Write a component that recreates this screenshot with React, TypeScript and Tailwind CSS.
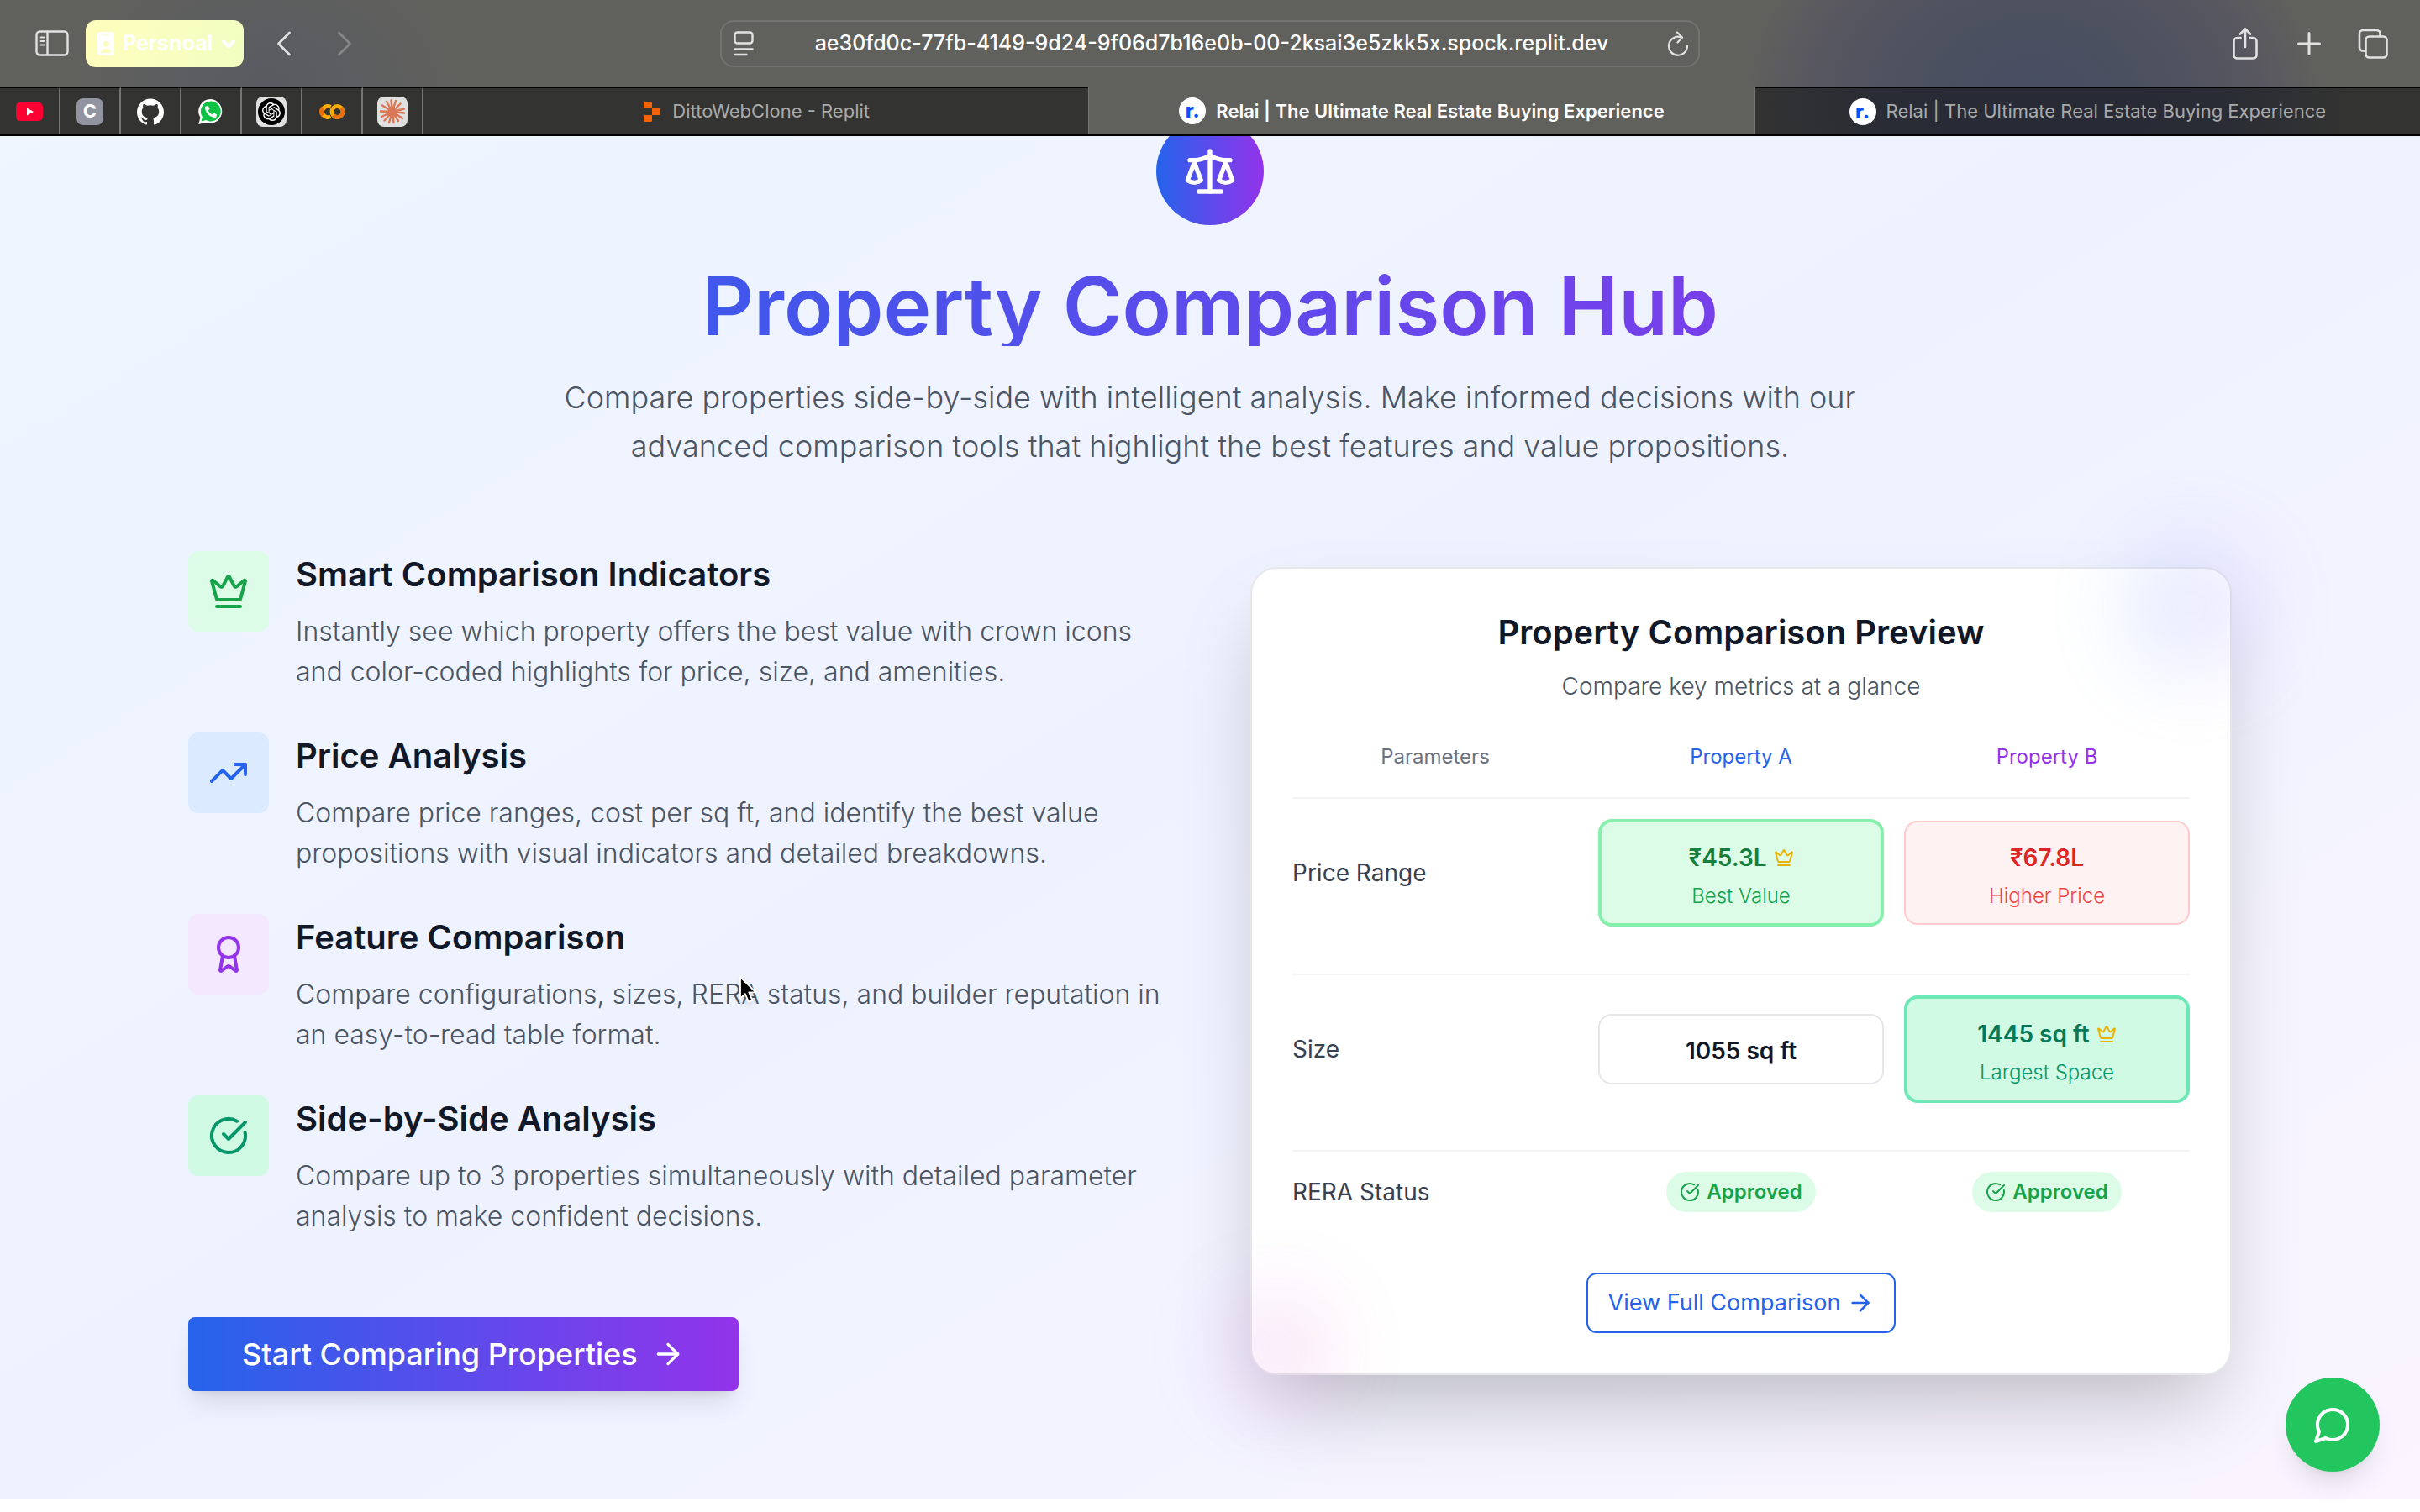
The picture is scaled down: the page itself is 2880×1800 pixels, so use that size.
import type { ReactNode } from "react";
import { SiGithub, SiOpenai, SiReplit } from "react-icons/si";
import { FaPhoneAlt } from "react-icons/fa";

type IconProps = { className?: string };

function Stroke({ className, children, width = 2 }: { className?: string; children: ReactNode; width?: number }) {
  return (
    <svg
      aria-hidden="true"
      viewBox="0 0 24 24"
      fill="none"
      stroke="currentColor"
      strokeWidth={width}
      strokeLinecap="round"
      strokeLinejoin="round"
      className={className}
    >
      {children}
    </svg>
  );
}

const ScaleIcon = ({ className }: IconProps) => (
  <Stroke className={className}>
    <path d="m16 16 3-8 3 8c-.87.65-1.92 1-3 1s-2.13-.35-3-1Z" />
    <path d="m2 16 3-8 3 8c-.87.65-1.92 1-3 1s-2.13-.35-3-1Z" />
    <path d="M7 21h10" />
    <path d="M12 3v18" />
    <path d="M3 7h2c2 0 5-1 7-2 2 1 5 2 7 2h2" />
  </Stroke>
);

const CrownIcon = ({ className }: IconProps) => (
  <Stroke className={className}>
    <path d="M11.562 3.266a.5.5 0 0 1 .876 0L15.39 8.87a1 1 0 0 0 1.516.294L21.183 5.5a.5.5 0 0 1 .798.519l-2.834 10.246a1 1 0 0 1-.956.734H5.81a1 1 0 0 1-.957-.734L2.02 6.02a.5.5 0 0 1 .798-.519l4.276 3.664a1 1 0 0 0 1.516-.294z" />
    <path d="M5 21h14" />
  </Stroke>
);

const TrendIcon = ({ className }: IconProps) => (
  <Stroke className={className}>
    <polyline points="22 7 13.5 15.5 8.5 10.5 2 17" />
    <polyline points="16 7 22 7 22 13" />
  </Stroke>
);

const AwardIcon = ({ className }: IconProps) => (
  <Stroke className={className}>
    <path d="m15.477 12.89 1.515 8.526a.5.5 0 0 1-.81.47l-3.58-2.687a1 1 0 0 0-1.197 0l-3.586 2.686a.5.5 0 0 1-.81-.469l1.514-8.526" />
    <circle cx="12" cy="8" r="6" />
  </Stroke>
);

const CheckIcon = ({ className }: IconProps) => (
  <Stroke className={className}>
    <path d="M21.801 10A10 10 0 1 1 17 3.335" />
    <path d="m9 11 3 3L22 4" />
  </Stroke>
);

const ArrowIcon = ({ className }: IconProps) => (
  <Stroke className={className}>
    <path d="M5 12h14" />
    <path d="m12 5 7 7-7 7" />
  </Stroke>
);

const ChatIcon = ({ className }: IconProps) => (
  <Stroke className={className}>
    <path d="M7.9 20A9 9 0 1 0 4 16.1L2 22Z" />
  </Stroke>
);

function ToolButton({ label, className = "", children }: { label: string; className?: string; children: ReactNode }) {
  return (
    <button type="button" aria-label={label} className={`flex shrink-0 items-center justify-center text-[#e2e2e2] ${className}`}>
      {children}
    </button>
  );
}

function Toolbar() {
  return (
    <div className="flex h-26 items-center bg-[#60605d] bg-[radial-gradient(ellipse_340px_250px_at_84%_110%,#484e63_0%,#4b5060_35%,#53545f_65%,#595860_80%,transparent_100%),radial-gradient(ellipse_220px_160px_at_11%_100%,#595b62_0%,transparent_100%)] px-8">
      <div className="flex flex-1 items-center">
        <ToolButton label="Show sidebar" className="ml-1.5 h-14 w-12">
          <svg viewBox="0 0 40 32" className="h-8 w-10" fill="none" stroke="currentColor" strokeWidth="2.4" strokeLinecap="round">
            <rect x="1.5" y="1.5" width="37" height="28" rx="4" />
            <path d="M14.5 2v27" />
            <path d="M6.5 8.500h4M6.500 13h4M6.500 17.500h4" strokeWidth="1.800" />
          </svg>
        </ToolButton>
        <button
          type="button"
          className="ml-4 flex h-14 items-center rounded-xl bg-[linear-gradient(100deg,#fefdbb,#fafec0_40%,#f1fec0)] pr-1 pl-3.5 text-white"
        >
          <svg aria-hidden="true" viewBox="0 0 20 28" className="h-7 w-5">
            <rect width="20" height="28" rx="3" fill="#fff" />
            <path d="M6 3.700h8" stroke="#fbfcbe" strokeWidth="1.300" strokeLinecap="round" />
            <circle cx="10" cy="14.500" r="3.200" fill="#fbfcbe" />
            <path d="M4 25c0-3.500 2.500-5 6-5s6 1.500 6 5Z" fill="#fbfcbe" />
          </svg>
          <span className="ml-2.5 text-[25px] font-bold">Persnoal</span>
          <Stroke className="ml-1 size-7" width={3.4}>
            <path d="m7 10 5 5 5-5" />
          </Stroke>
        </button>
        <ToolButton label="Back" className="ml-6 h-14 w-12">
          <svg viewBox="0 0 18 30" className="h-[30px] w-[18px]" fill="none" stroke="currentColor" strokeWidth="2.800" strokeLinecap="round" strokeLinejoin="round">
            <path d="M15.500 2 2.500 15l13 13" />
          </svg>
        </ToolButton>
        <ToolButton label="Forward" className="ml-6 h-14 w-12 opacity-30">
          <svg viewBox="0 0 18 30" className="h-[30px] w-[18px]" fill="none" stroke="currentColor" strokeWidth="2.800" strokeLinecap="round" strokeLinejoin="round">
            <path d="m2.500 2 13 13-13 13" />
          </svg>
        </ToolButton>
      </div>
      <div className="flex h-14 w-[1166px] items-center rounded-2xl border-2 border-[#737371] px-2">
        <ToolButton label="Page settings" className="h-12 w-9">
          <svg viewBox="0 0 24 30" className="h-[30px] w-6" fill="none" stroke="currentColor" strokeWidth="2.400" strokeLinecap="round">
            <rect x="1.500" y="1.500" width="21" height="13" rx="3" />
            <path d="M1.500 21.500h21M1.500 28h14" />
          </svg>
        </ToolButton>
        <input
          aria-label="Address"
          className="min-w-0 flex-1 bg-transparent text-center text-[25px] font-medium text-white outline-none"
          defaultValue="ae30fd0c-77fb-4149-9d24-9f06d7b16e0b-00-2ksai3e5zkk5x.spock.replit.dev"
        />
        <ToolButton label="Reload" className="h-12 w-8">
          <svg viewBox="0 0 26 30" className="h-[30px] w-[26px]" fill="none" stroke="currentColor" strokeWidth="2.200" strokeLinecap="round" strokeLinejoin="round">
            <path d="M16.500 7.300A11 11 0 1 0 24 17.500" />
            <path d="m12 1.500 6 6-5.500 6" />
          </svg>
        </ToolButton>
      </div>
      <div className="flex flex-1 items-center justify-end gap-7">
        <ToolButton label="Share" className="h-14 w-12">
          <svg viewBox="0 0 30 38" className="h-[38px] w-[30px]" fill="none" stroke="currentColor" strokeWidth="2.600" strokeLinecap="round" strokeLinejoin="round">
            <path d="M9.500 12H5.500a4 4 0 0 0-4 4v16.500a4 4 0 0 0 4 4h19a4 4 0 0 0 4-4V16a4 4 0 0 0-4-4h-4" />
            <path d="M15 23V2M9 7.500 15 1.500l6 6" />
          </svg>
        </ToolButton>
        <ToolButton label="New tab" className="h-14 w-12">
          <svg viewBox="0 0 28 28" className="size-7" fill="none" stroke="currentColor" strokeWidth="3" strokeLinecap="round">
            <path d="M14 1.500v25M1.500 14h25" />
          </svg>
        </ToolButton>
        <ToolButton label="Tab overview" className="h-14 w-12">
          <svg viewBox="0 0 36 36" className="size-9" fill="none" stroke="currentColor" strokeWidth="2.600" strokeLinejoin="round">
            <rect x="9.500" y="9.500" width="25" height="25" rx="4" />
            <path d="M9 26.500H6a4 4 0 0 1-4-4V6a4 4 0 0 1 4-4h16.500a4 4 0 0 1 4 4v3" />
          </svg>
        </ToolButton>
      </div>
    </div>
  );
}

const YoutubeIcon = () => (
  <svg aria-hidden="true" viewBox="0 0 32 22" className="h-[22px] w-8">
    <rect width="32" height="22" rx="5" fill="#ff0033" />
    <path d="M13 6.500 21 11l-8 4.500Z" fill="#fff" />
  </svg>
);

const WhatsappIcon = () => (
  <span className="relative flex size-8 items-center justify-center">
    <svg aria-hidden="true" viewBox="0 0 32 32" className="size-8">
      <path d="M16 1A14.500 14.500 0 0 0 3.400 23L1.300 31l8-2.100A14.500 14.500 0 1 0 16 1Z" fill="#fff" />
      <path d="M16 3.500A12 12 0 0 0 5.900 22L4.500 27.600l5.600-1.500A12 12 0 1 0 16 3.500Z" fill="#0fc144" />
    </svg>
    <FaPhoneAlt aria-hidden="true" className="absolute size-3.5 text-white" />
  </span>
);

const ColabIcon = () => (
  <svg aria-hidden="true" viewBox="0 0 32 20" className="h-5 w-8" fill="none" strokeWidth="5">
    <path d="M14.500 4.500A6.500 6.500 0 1 0 14.500 15.500" stroke="#f9ab00" />
    <path d="M5.400 5.400A6.500 6.500 0 0 0 5.400 14.600" stroke="#e8710a" />
    <circle cx="22.500" cy="10" r="6.500" stroke="#f9ab00" />
    <path d="M27.100 5.400A6.500 6.500 0 0 1 17.900 14.600" stroke="#e8710a" />
  </svg>
);

const BurstIcon = () => (
  <span className="flex size-9 items-center justify-center rounded-lg bg-[#e0e0e0]">
    <svg aria-hidden="true" viewBox="0 0 32 32" className="size-8" stroke="#d97757" strokeWidth="2.400" strokeLinecap="round">
      <path d="M16 16 14.500 2.500M16 16l4-13M16 16l9.500-9.500M16 16l14-3.500M16 16l14 1.500M16 16l12 8M16 16l7 11M16 16l1.500 13M16 16l-4 13M16 16 6.500 26.500M16 16 3 22M16 16l-14-.500M16 16 4 8.500M16 16 9 4" />
    </svg>
  </span>
);

const RelaiIcon = () => (
  <span aria-hidden="true" className="flex size-8 shrink-0 items-center justify-center rounded-full bg-white text-[24px] leading-8 font-extrabold text-[#0b50ff]">
    r.
  </span>
);

const pinned: { label: string; icon: ReactNode }[] = [
  { label: "YouTube", icon: <YoutubeIcon /> },
  {
    label: "C",
    icon: <span className="flex size-8 items-center justify-center rounded-lg bg-[#9394a1] text-[22px] font-bold text-white">C</span>,
  },
  { label: "GitHub", icon: <SiGithub className="size-8 text-white" /> },
  { label: "WhatsApp", icon: <WhatsappIcon /> },
  {
    label: "ChatGPT",
    icon: (
      <span className="flex size-9 items-center justify-center rounded-lg bg-[#e0e0e0]">
        <span className="flex size-8 items-center justify-center rounded-full bg-black">
          <SiOpenai className="size-[22px] text-white" />
        </span>
      </span>
    ),
  },
  { label: "Colab", icon: <ColabIcon /> },
  { label: "Claude", icon: <BurstIcon /> },
];

function TabBar() {
  return (
    <nav aria-label="Tabs" className="flex h-[58px] border-b-2 border-black bg-[#333331] text-[22px] text-[#a9a9a9]">
      {pinned.map((p) => (
        <button
          key={p.label}
          type="button"
          aria-label={p.label}
          className="flex w-18 shrink-0 items-center justify-center border-t border-r-2 border-t-black border-r-[#757574]"
        >
          {p.icon}
        </button>
      ))}
      <button type="button" className="flex min-w-0 flex-1 items-center justify-center gap-3 border-t border-black">
        <SiReplit aria-hidden="true" className="size-6 shrink-0 text-[#f26207]" />
        <span className="truncate">DittoWebClone - Replit</span>
      </button>
      <button
        type="button"
        className="flex min-w-0 flex-1 items-center justify-center gap-3 border-x border-[#757574] bg-[#60605d] font-semibold text-white"
      >
        <RelaiIcon />
        <span className="truncate">Relai | The Ultimate Real Estate Buying Experience</span>
      </button>
      <button
        type="button"
        className="flex min-w-0 flex-1 items-center justify-center gap-3 border-t border-black bg-[radial-gradient(ellipse_360px_200px_at_44%_40%,#282b36_0%,#292c35_55%,transparent_100%)]"
      >
        <RelaiIcon />
        <span className="truncate">Relai | The Ultimate Real Estate Buying Experience</span>
      </button>
    </nav>
  );
}

const features = [
  {
    title: "Smart Comparison Indicators",
    text: "Instantly see which property offers the best value with crown icons and color-coded highlights for price, size, and amenities.",
    tile: "bg-[#dcfce7] text-[#16a34a]",
    Icon: CrownIcon,
  },
  {
    title: "Price Analysis",
    text: "Compare price ranges, cost per sq ft, and identify the best value propositions with visual indicators and detailed breakdowns.",
    tile: "bg-[#dbeafe] text-[#2563eb]",
    Icon: TrendIcon,
  },
  {
    title: "Feature Comparison",
    text: "Compare configurations, sizes, RERA status, and builder reputation in an easy-to-read table format.",
    tile: "bg-[#f3e8ff] text-[#9333ea]",
    Icon: AwardIcon,
  },
  {
    title: "Side-by-Side Analysis",
    text: "Compare up to 3 properties simultaneously with detailed parameter analysis to make confident decisions.",
    tile: "bg-[#d1fae5] text-[#059669]",
    Icon: CheckIcon,
  },
];

function Metric({ box, value, valueColor, note, noteColor, best }: {
  box: string;
  value: string;
  valueColor: string;
  note?: string;
  noteColor?: string;
  best?: boolean;
}) {
  return (
    <div className={`rounded-2xl p-4 text-center ${box}`}>
      <div className={`flex h-12 items-center justify-center gap-2 pt-1 text-[28px] font-semibold ${valueColor}`}>
        {value}
        {best && <CrownIcon className="size-6 text-[#eab308]" />}
      </div>
      {note && <div className={`mt-2 text-[24px] leading-8 font-light ${noteColor}`}>{note}</div>}
    </div>
  );
}

function Approved() {
  return (
    <span className="inline-flex h-12 items-center gap-2 rounded-full bg-[#dcfce7] px-4 text-[24px] font-semibold text-[#16a34a]">
      <CheckIcon className="size-6" />
      Approved
    </span>
  );
}

function PreviewCard() {
  return (
    <div className="relative">
      <div className="rounded-[32px] border-2 border-[#e5e7eb] bg-white p-12 shadow-[0_50px_100px_-24px_rgba(0,0,0,0.25)]">
        <h3 className="text-center text-[40px] leading-14 font-semibold text-[#111827]">Property Comparison Preview</h3>
        <p className="mt-4 text-center text-[28px] leading-10 font-light text-[#4b5563]">Compare key metrics at a glance</p>
        <table className="mt-12 block w-full">
          <thead className="block">
            <tr className="grid grid-cols-3 gap-6 border-b-2 border-[#f3f4f6] pb-8 text-[24px] leading-8">
              <th scope="col" className="font-normal text-[#6b7280]">Parameters</th>
              <th scope="col" className="font-normal text-[#2563eb]">Property A</th>
              <th scope="col" className="font-normal text-[#9333ea]">Property B</th>
            </tr>
          </thead>
          <tbody className="block">
            <tr className="grid grid-cols-3 items-center gap-6 pt-6 pb-14">
              <th scope="row" className="text-left text-[28px] font-normal text-[#374151]">Price Range</th>
              <td className="p-0">
                <Metric best box="border-4 border-[#86efac] bg-[#dcfce7]" value="₹45.3L" valueColor="text-[#15803d]" note="Best Value" noteColor="text-[#16a34a]" />
              </td>
              <td className="p-0">
                <Metric box="border-2 border-[#fecaca] bg-[#fef2f2]" value="₹67.8L" valueColor="text-[#dc2626]" note="Higher Price" noteColor="text-[#ef4444]" />
              </td>
            </tr>
            <tr className="grid grid-cols-3 items-center gap-6 border-t-2 border-[#f3f4f6] pt-6 pb-14">
              <th scope="row" className="text-left text-[28px] font-normal text-[#374151]">Size</th>
              <td className="p-0">
                <Metric box="border-2 border-[#e5e7eb] bg-white" value="1055 sq ft" valueColor="text-[#111827]" />
              </td>
              <td className="p-0">
                <Metric best box="border-4 border-[#6ee7b7] bg-[#d1fae5]" value="1445 sq ft" valueColor="text-[#047857]" note="Largest Space" noteColor="text-[#059669]" />
              </td>
            </tr>
            <tr className="grid grid-cols-3 items-center gap-6 border-t-2 border-[#f3f4f6] py-6">
              <th scope="row" className="text-left text-[28px] font-normal text-[#374151]">RERA Status</th>
              <td className="flex justify-center p-0"><Approved /></td>
              <td className="flex justify-center p-0"><Approved /></td>
            </tr>
          </tbody>
        </table>
        <div className="mt-12 flex justify-center">
          <button type="button" className="flex h-18 items-center gap-2 rounded-xl border-2 border-[#2563eb] bg-white px-6 text-[27px] text-[#2563eb]">
            View Full Comparison
            <ArrowIcon className="size-8" />
          </button>
        </div>
      </div>
      <div aria-hidden="true" className="pointer-events-none absolute -top-8 -right-8 size-40 rounded-full bg-[linear-gradient(to_right,#60a5fa,#c084fc)] opacity-20 blur-[48px]" />
      <div aria-hidden="true" className="pointer-events-none absolute -bottom-8 -left-8 size-32 rounded-full bg-[linear-gradient(to_right,#c084fc,#f472b6)] opacity-20 blur-[48px]" />
    </div>
  );
}

function Cursor() {
  return (
    <svg aria-hidden="true" viewBox="0 0 24 36" className="pointer-events-none absolute top-[1161px] left-[879px] h-9 w-6 drop-shadow-md">
      <path d="M2 2v25.500l5.800-5.400 4.100 9.600 4.500-1.900-4.100-9.400h8.200Z" fill="#000" stroke="#fff" strokeWidth="1.800" strokeLinejoin="round" />
    </svg>
  );
}

export default function App() {
  return (
    <div className="relative min-h-screen overflow-hidden bg-white font-['Inter','Noto_Sans',sans-serif]">
      <header className="fixed inset-x-0 top-0 z-10">
        <Toolbar />
        <TabBar />
      </header>
      <main className="pt-3">
        <section className="bg-[linear-gradient(to_bottom_right,#eff6ff,#eef2ff_50%,#faf5ff)] px-16 py-32">
          <div className="mx-auto max-w-[2432px]">
            <div className="text-center">
              <div className="mx-auto flex size-32 items-center justify-center rounded-full bg-[linear-gradient(to_right,#2563eb,#9333ea)] text-white">
                <ScaleIcon className="size-16" />
              </div>
              <h2 className="mt-12 bg-[linear-gradient(to_right,#2563eb,#9333ea)] bg-clip-text text-[96px] leading-24 font-semibold text-transparent">
                Property Comparison Hub
              </h2>
              <p className="mx-auto mt-8 max-w-[1568px] text-[36px] leading-[58px] font-light text-[#4b5563]">
                Compare properties side-by-side with intelligent analysis. Make informed decisions with our advanced comparison tools that
                highlight the best features and value propositions.
              </p>
            </div>
            <div className="mt-24 grid grid-cols-2 items-center gap-24">
              <div>
                <ul className="flex flex-col gap-12">
                  {features.map(({ title, text, tile, Icon }) => (
                    <li key={title} className="flex gap-8">
                      <div className={`flex size-24 shrink-0 items-center justify-center rounded-xl ${tile}`}>
                        <Icon className="size-12" />
                      </div>
                      <div>
                        <h3 className="text-[40px] leading-14 font-semibold text-[#111827]">{title}</h3>
                        <p className="mt-4 text-[32px] leading-12 font-light text-[#4b5563]">{text}</p>
                      </div>
                    </li>
                  ))}
                </ul>
                <button
                  type="button"
                  className="mt-24 flex h-22 items-center gap-4 rounded-lg bg-[linear-gradient(to_right,#2563eb,#9333ea)] px-16 text-[36px] font-medium text-white shadow-[0_20px_30px_-6px_rgba(0,0,0,0.1),0_8px_12px_-8px_rgba(0,0,0,0.1)]"
                >
                  Start Comparing Properties
                  <ArrowIcon className="size-10" />
                </button>
              </div>
              <PreviewCard />
            </div>
          </div>
        </section>
      </main>
      <button
        type="button"
        aria-label="Chat with us"
        className="fixed right-12 bottom-12 flex size-28 items-center justify-center rounded-full bg-[#22c55e] text-white shadow-[0_20px_30px_-6px_rgba(0,0,0,0.1),0_8px_12px_-8px_rgba(0,0,0,0.1)]"
      >
        <ChatIcon className="size-12" />
      </button>
      <Cursor />
    </div>
  );
}
